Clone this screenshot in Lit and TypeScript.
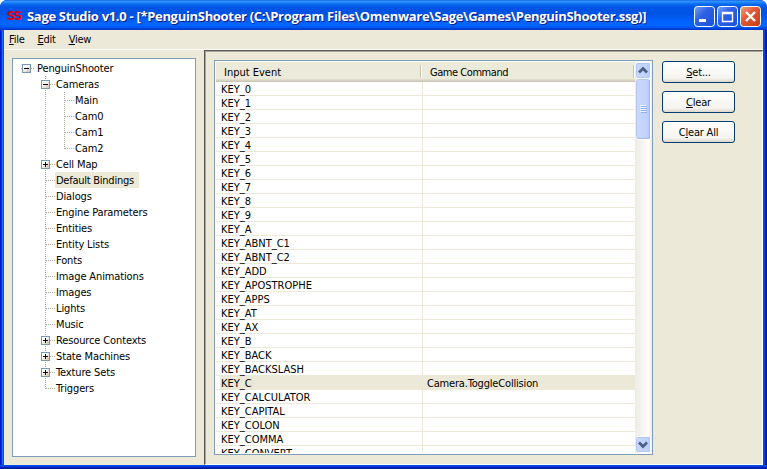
import { LitElement, html, css, svg, nothing } from "lit";
import { customElement } from "lit/decorators.js";

type Node = { label: string; level: number; box?: "plus" | "minus"; last?: boolean; selected?: boolean };

const TREE: Node[] = [
  { label: "PenguinShooter", level: 0, box: "minus" },
  { label: "Cameras", level: 1, box: "minus" },
  { label: "Main", level: 2 },
  { label: "Cam0", level: 2 },
  { label: "Cam1", level: 2 },
  { label: "Cam2", level: 2, last: true },
  { label: "Cell Map", level: 1, box: "plus" },
  { label: "Default Bindings", level: 1, selected: true },
  { label: "Dialogs", level: 1 },
  { label: "Engine Parameters", level: 1 },
  { label: "Entities", level: 1 },
  { label: "Entity Lists", level: 1 },
  { label: "Fonts", level: 1 },
  { label: "Image Animations", level: 1 },
  { label: "Images", level: 1 },
  { label: "Lights", level: 1 },
  { label: "Music", level: 1 },
  { label: "Resource Contexts", level: 1, box: "plus" },
  { label: "State Machines", level: 1, box: "plus" },
  { label: "Texture Sets", level: 1, box: "plus" },
  { label: "Triggers", level: 1, last: true },
];

const KEYS = [
  ..."0123456789A".split(""), "ABNT_C1", "ABNT_C2", "ADD", "APOSTROPHE", "APPS", "AT", "AX", "B",
  "BACK", "BACKSLASH", "C", "CALCULATOR", "CAPITAL", "COLON", "COMMA", "CONVERT",
].map((k) => "KEY_" + k);
const COMMANDS: Record<string, string> = { KEY_C: "Camera.ToggleCollision" };

@customElement("tree-view")
export class TreeView extends LitElement {
  static styles = css`
    :host { display: block; box-sizing: border-box; background: #fff; border: 1px solid #7f9db9; padding: 1px 0 0 4px; overflow: hidden; letter-spacing: -0.13px; }
    .row { display: flex; height: 16px; line-height: 18px; white-space: pre; }
    svg { display: block; flex: none; height: 16px; shape-rendering: crispEdges; }
    .dots { stroke: #aca899; stroke-dasharray: 1 1; fill: none; }
    .label { padding: 0 3px 0 1px; }
    .selected { background: #ece9d8; letter-spacing: -0.25px; padding-right: 5px; }
    .frame { fill: url(#face); stroke: #7898b5; }
    .sign { stroke: #000; fill: none; }
  `;

  private lines(n: Node) {
    const x = 9.5 + 19 * n.level;
    return svg`
      ${n.level > 1 ? svg`<path class="dots" d="M28.5 0V16"/>` : nothing}
      ${n.level > 0
        ? svg`<path class="dots" d="M${x} 0V${n.last ? 9 : 16}"/><path class="dots" d="M${x} 8.5H${x + 9}"/>`
        : nothing}
      ${n.box
        ? svg`<defs><linearGradient id="face" x1="0" y1="0" x2="1" y2="1"><stop offset=".3" stop-color="#fff"/><stop offset="1" stop-color="#c6bdae"/></linearGradient></defs>
            ${n.level === 0 ? svg`<path class="dots" d="M4 8.5h14"/>` : nothing}
            <rect class="frame" x="${x - 4}" y="4.5" width="8" height="8" rx="1"/>
            <path class="sign" d="M${x - 2.5} 8.5h5${n.box === "plus" ? "M" + x + " 6v5" : ""}"/>`
        : nothing}`;
  }

  render() {
    return TREE.map((n) => {
      const w = 19 + 19 * n.level;
      return html`<div class="row">
        <svg width=${w} viewBox="0 0 ${w} 16">${this.lines(n)}</svg><span class="label ${n.selected ? "selected" : ""}">${n.label}</span>
      </div>`;
    });
  }
}

@customElement("binding-list")
export class BindingList extends LitElement {
  static styles = css`
    :host { box-sizing: border-box; display: grid; grid-template-columns: 1fr 17px; background: #fff; border: 1px solid #7f9db9; padding: 1px 0 0 1px; overflow: hidden; }
    .table { overflow: hidden; min-width: 0; height: 391px; }
    .head { display: grid; grid-template-columns: 206px 1fr; height: 20px; line-height: 20px; box-sizing: border-box; background: linear-gradient(#ebeadb 0 17px, #e2decd 17px 18px, #d6d2c2 18px 19px, #cbc7b8 19px); }
    .cell { padding-left: 8px; height: 17px; display: flex; align-items: center; position: relative; }
    .cell + .cell { letter-spacing: -0.45px; }
    .cell::after { content: ""; position: absolute; right: 0; top: 3px; width: 1px; height: 13px; background: #c7c5b2; border-right: 1px solid #fff; }
    .cell span { padding-top: 4px; }
    .row { display: grid; grid-template-columns: 207px 1fr; height: 13px; line-height: 15px; border-bottom: 1px solid #ece9d8; white-space: pre; }
    .key { padding-left: 5px; border-right: 1px solid #ece9d8; }
    .cmd { padding-left: 4px; letter-spacing: -0.18px; }
    .sel { background: linear-gradient(90deg, #fff 4px, #ece9d8 4px); }
    .bar { display: flex; flex-direction: column; justify-content: space-between; background: linear-gradient(90deg, #eeede5, #f3f1ec 30%, #fefefb 80%, #eeede5); height: 391px; }
    svg { display: block; }
  `;
  render() {
    const arrow = (d: string) => svg`
      <rect x="1.5" y=".5" width="14" height="16" rx="2" fill="url(#thumb)" stroke="#fff"/>
      <rect x="1.5" y="1.5" width="13" height="14" rx="1.5" fill="none" stroke="#b4c8f6"/>
      <path d=${d} fill="none" stroke="#4d6185" stroke-width="2.8"/>`;
    const grad = svg`<defs><linearGradient id="thumb"><stop offset="0" stop-color="#cad8fd"/><stop offset=".7" stop-color="#c1d2fc"/><stop offset="1" stop-color="#b1c5f5"/></linearGradient></defs>`;
    return html`
      <div class="table">
        <div class="head"><div class="cell"><span>Input Event</span></div><div class="cell"><span>Game Command</span></div></div>
        ${KEYS.map((k) => html`<div class="row ${COMMANDS[k] ? "sel" : ""}"><div class="key">${k}</div><div class="cmd">${COMMANDS[k] ?? ""}</div></div>`)}
      </div>
      <div class="bar">
        <svg width="17" height="79" viewBox="0 0 17 79">${grad}${arrow("M4 10.5L8 6.500l4 4")}
          <rect x="1.5" y="17.5" width="14" height="60" rx="2" fill="url(#thumb)" stroke="#fff"/>
          <rect x="1.5" y="17.5" width="13" height="59" rx="2" fill="none" stroke="#98b0e8" stroke-opacity=".7"/>
          <path d="M5 43.5h6m-6 2h6m-6 2h6m-6 2h6" stroke="#eef4fe"/><path d="M6 44.5h6m-6 2h6m-6 2h6m-6 2h6" stroke="#8cb0f8"/>
        </svg>
        <svg width="17" height="17" viewBox="0 0 17 17">${grad}${arrow("M4 6.5L8 10.500l4-4")}</svg>
      </div>`;
  }
}

@customElement("app-root")
export class AppRoot extends LitElement {
  static styles = css`
    :host { display: block; width: 767px; height: 469px; background: #fff; font: 11px "DejaVu Sans Condensed", "DejaVu Sans", sans-serif; color: #000; cursor: default; }
    .window { box-sizing: border-box; height: 469px; display: flex; flex-direction: column; border-radius: 7px 7px 0 0; overflow: hidden; background: #0831d9; }
    .title { height: 30px; flex: none; display: flex; align-items: center; padding: 0 6px 0 7px; box-sizing: border-box;
      background: linear-gradient(#0058e6 0, #3a93ff 1px, #288eff 2px, #0a6cf0 4px, #0055e5 7px, #0054e3 14px, #0060fa 20px, #0066ff 25px, #005bf0 27px, #003dd7 29px, #0034c5 30px); }
    .logo { width: 16px; flex: none; font: bold 12px/16px "DejaVu Sans", sans-serif; letter-spacing: -1.4px; color: #e00010; padding-top: 2px; }
    .caption { flex: 1; margin-left: 4px; padding-top: 2px; white-space: pre; font: bold 13px "Open Sans", sans-serif; letter-spacing: -0.31px; color: #fff; text-shadow: 1px 1px 0 #0a1883; }
    .buttons { display: flex; gap: 2px; padding-top: 3px; }
    .outer { flex: 1; min-height: 0; display: flex; flex-direction: column; background: linear-gradient(90deg, #0019cf 0 1px, #0831d9 1px 2px, #166aee 2px 3px, #0855dd 3px 4px, #ece9d8 4px 763px, #0046f0 763px 765px, #001ca8 765px 766px, #00138c 766px); padding: 0 4px; }
    .menu { height: 19px; flex: none; display: flex; gap: 13px; padding: 0 5px; line-height: 19px; letter-spacing: -0.25px; border-bottom: 1px solid #fff; }
    .body { flex: 1; min-height: 0; display: grid; grid-template-columns: 200px 1fr; }
    .left { padding: 8px 8px 8px 8px; display: grid; }
    .right { border: 2px groove #aca899; border-right: 1px solid #fff; border-bottom: 1px solid #fff; display: flex; align-items: flex-start; padding: 8px 0 0 8px; gap: 9px; }
    tree-view { width: 184px; height: 399px; }
    binding-list { width: 439px; height: 395px; }
    .actions { display: flex; flex-direction: column; gap: 8px; padding-top: 1px; }
    .action { width: 73px; height: 22px; box-sizing: border-box; border: 1px solid #003c74; border-radius: 3px; background: linear-gradient(#fff, #f5f4ef 80%, #dcd7cb); text-align: center; line-height: 21px; letter-spacing: -0.2px; }
    .bottom { height: 4px; flex: none; background: linear-gradient(#0855dd, #0046e8 1px, #0831d9 2px, #001ca8 3px, #00138c); }
    u { text-underline-offset: 1px; }
    svg { display: block; }
  `;
  render() {
    return html`<div class="window">
      <div class="title">
        <span class="logo">SS</span>
        <span class="caption">Sage Studio v1.0 - [*PenguinShooter (C:\\Program Files\\Omenware\\Sage\\Games\\PenguinShooter.ssg)]</span>
        <div class="buttons">
          ${["M5 14.500h7", "M5.500 6.500h10v9h-10zM5 6.500h11M5 7.500h11", "M6 6l9 9M15 6l-9 9"].map((d, i) => html`
            <svg width="21" height="21" viewBox="0 0 21 21">
              <defs><linearGradient id="g${i}" x2="1" y2="1"><stop stop-color=${i === 2 ? "#f0a08a" : "#7aa4f8"}/><stop offset=".4" stop-color=${i === 2 ? "#e35b38" : "#2f62e5"}/><stop offset="1" stop-color=${i === 2 ? "#c83a10" : "#1a50d8"}/></linearGradient></defs>
              <rect x=".5" y=".5" width="20" height="20" rx="3" fill="url(#g${i})" stroke="#fff"/>
              <path d=${d} fill="none" stroke="#fff" stroke-width=${i === 0 ? 3 : i === 1 ? 1.4 : 2.4}/>
            </svg>`)}
        </div>
      </div>
      <div class="outer">
        <div class="menu"><span><u>F</u>ile</span><span><u>E</u>dit</span><span><u>V</u>iew</span></div>
        <div class="body">
          <div class="left"><tree-view></tree-view></div>
          <div class="right">
            <binding-list></binding-list>
            <div class="actions">
              <div class="action"><u>S</u>et...</div>
              <div class="action"><u>C</u>lear</div>
              <div class="action">C<u>l</u>ear All</div>
            </div>
          </div>
        </div>
      </div>
      <div class="bottom"></div>
    </div>`;
  }
}
